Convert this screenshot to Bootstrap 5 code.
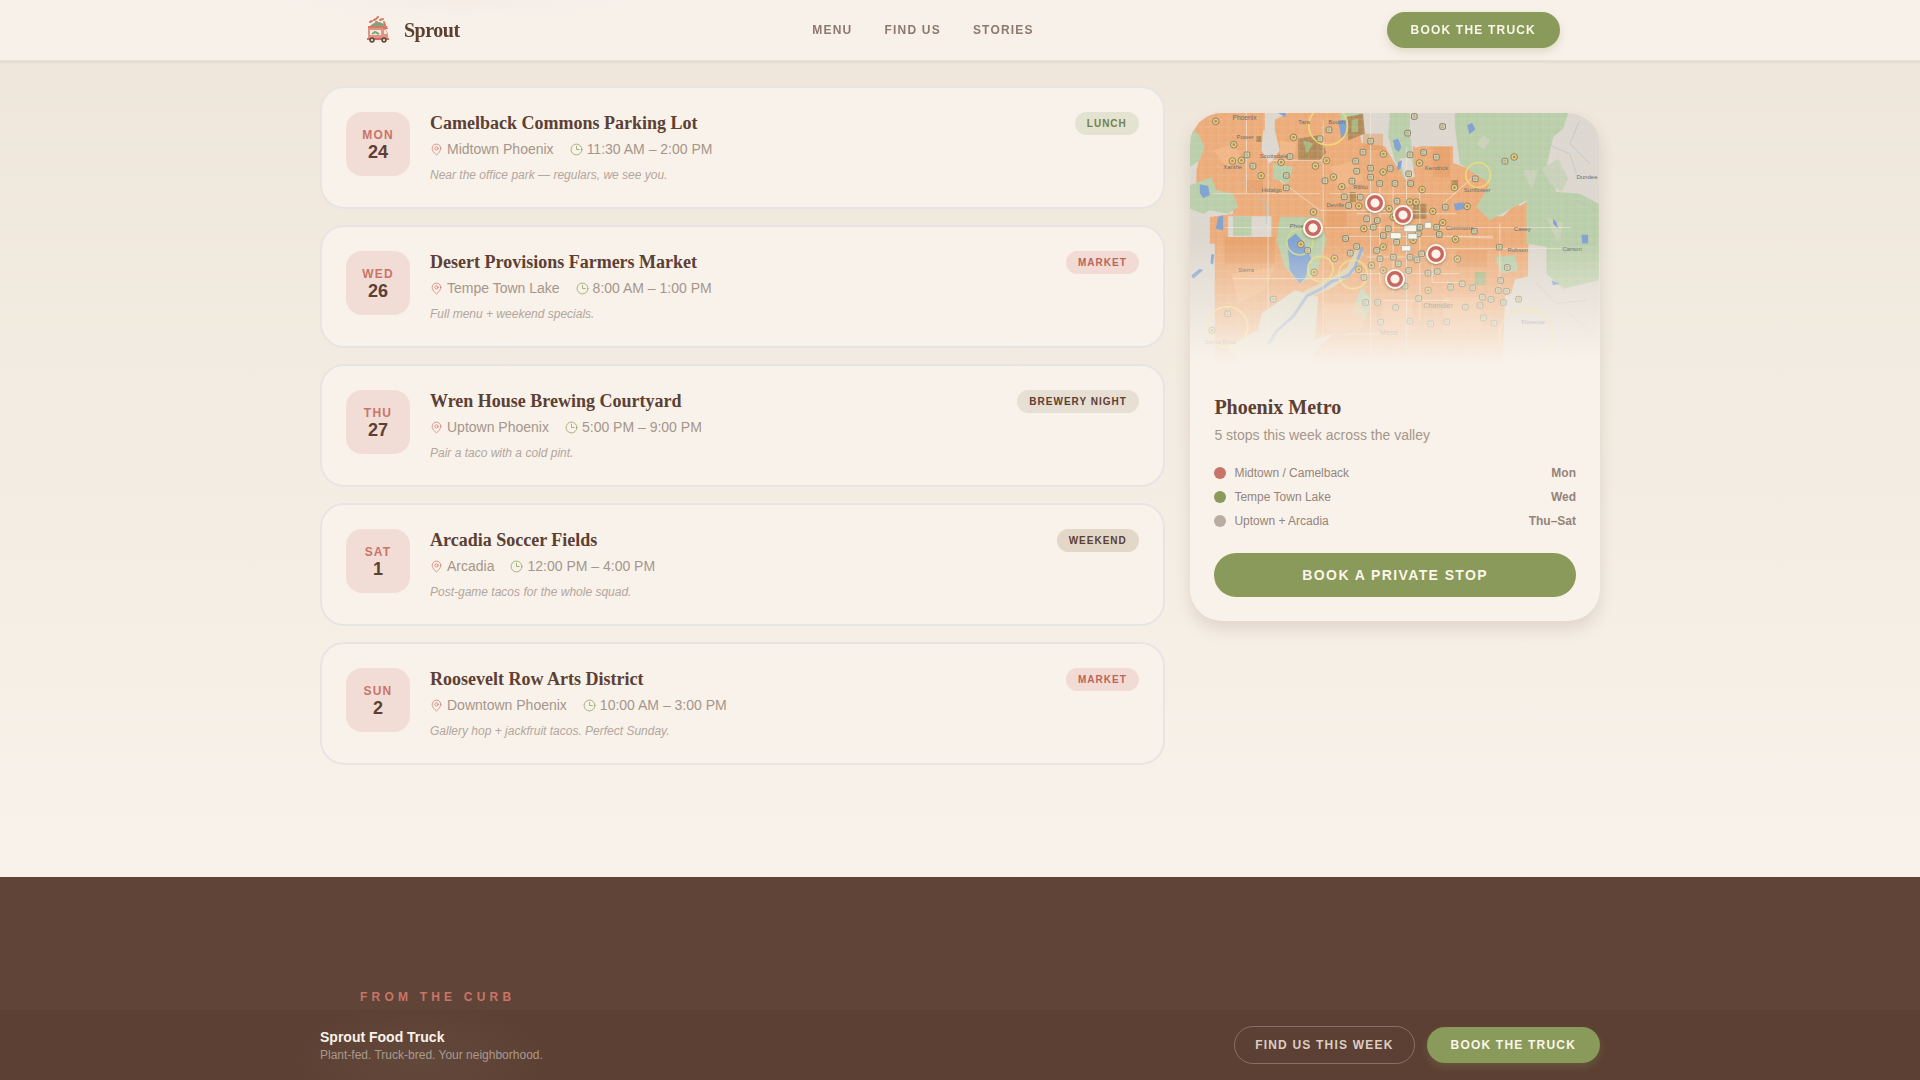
<!DOCTYPE html>
<html lang="en">
<head>
<meta charset="utf-8">
<meta name="viewport" content="width=device-width, initial-scale=1">
<title>Sprout Food Truck</title>
<link href="https://cdn.jsdelivr.net/npm/bootstrap@5.3.0/dist/css/bootstrap.min.css" rel="stylesheet">
<style>
:root{--cream:#f9f2ea;--brown:#5c4033;--rose:#c97468;--leaf:#8a9a5b;--muted:#a5968b}
body{font-family:"Liberation Sans",Arial,sans-serif;background:var(--cream);color:var(--brown);font-size:14px;line-height:20px}
.serif{font-family:"Liberation Serif","Times New Roman",serif;font-weight:700}
.wrap{max-width:1280px;margin-inline:auto;width:100%}
.site-nav{background:radial-gradient(ellipse 200px 24px at 460px 0,#f5ece6,transparent),#f8f1ea;border-bottom:1px solid #e8dfd8;box-shadow:0 1px 3px rgba(92,64,51,.1);padding:12px 0}
.site-nav .wrap{padding-inline:40px}
.brand-name{font-size:20px;line-height:28px;letter-spacing:-.025em;color:var(--brown)}
.nav-item-link{font-size:12px;line-height:16px;font-weight:700;letter-spacing:.1em;color:#8d796e;text-decoration:none}
.pill{font-size:12px;line-height:16px;font-weight:700;letter-spacing:.1em;padding:10px 24px;border:0;border-radius:50rem;background:var(--leaf);color:#fbf6e9;box-shadow:0 4px 8px rgba(138,154,91,.25)}
.pill:hover{background:#7a8a4d;color:#fff}
.pill-outline{background:transparent;border:1px solid #8a7064;color:#dccdc2;padding-inline:20px;box-shadow:none}
.pill-wide{font-size:14px;line-height:20px;padding-block:12px;box-shadow:none}
.stops{padding:86px 0 112px;background:linear-gradient(#eee6da,#f9f2ea)}
@media (min-width:992px){.stop-col{width:66%}.map-col{width:32%}}
.stop{background:var(--cream);border:2px solid #e7e4e3;border-radius:24px;padding:24px;gap:20px}
.day{width:64px;height:64px;border-radius:16px;background:#f2ddd6}
.day-name{font-size:12px;line-height:16px;font-weight:700;letter-spacing:.1em;color:var(--rose)}
.day-num{font-size:18px;line-height:18px;font-weight:700}
.stop-title{font-size:18px;line-height:23px}
.meta{color:var(--muted);gap:16px;margin-top:4px}
.meta svg{width:13px;height:13px;fill:none;stroke-width:1.5;stroke-linecap:round;stroke-linejoin:round}
.note{font-size:12px;line-height:16px;font-style:italic;color:#b3a69d;margin-top:8px}
.tag{font-size:10px;line-height:15px;font-weight:700;letter-spacing:.1em;padding:4px 12px;border-radius:50rem}
.tag-lunch{background:#e4e3d1;color:#738148}
.tag-market{background:#f2dbd5;color:#b9665b}
.tag-brewery{background:#e7dfd4;color:var(--brown)}
.tag-weekend{background:#e3d8c8;color:var(--brown)}
.map-card{top:113px;border-radius:32px;background:var(--cream);box-shadow:0 8px 16px rgba(92,64,51,.14)}
.map-box{height:256px;border-radius:32px 32px 0 0}
.map-box svg{width:100%;height:100%;display:block}
.map-fade{background:linear-gradient(rgba(249,242,234,.06) 50%,var(--cream) 98%)}
.pin{width:20px;height:20px;border-radius:50%;border:2px solid #fff6ef;background:radial-gradient(circle,#fff3ec 4px,#c9685f 5px);box-shadow:0 1px 3px rgba(92,64,51,.5)}
.metro{font-size:20px;line-height:28px}
.metro-sub{color:var(--muted);margin:4px 0 20px}
.legend{font-size:12px;line-height:16px;color:#95847a;gap:8px}
.dot{width:12px;height:12px;border-radius:50%}
.stories{background:#5f4437;padding:112px 0 0}
.stories .wrap{padding-inline:40px}
.eyebrow{font-size:12px;line-height:16px;font-weight:700;letter-spacing:.35em;color:var(--rose)}
.book-bar{background:radial-gradient(ellipse 130px 60px at 420px 50px,#62483b,transparent),#5c4033;padding:16px 0}
.tagline{font-size:12px;line-height:16px;color:#ab998e}
</style>
<script src="https://cdn.jsdelivr.net/npm/bootstrap@5.3.0/dist/js/bootstrap.bundle.min.js" defer></script>
</head>
<body class="d-flex flex-column min-vh-100">
<svg width="0" height="0" class="position-absolute" aria-hidden="true">
<symbol id="place" viewBox="0 0 24 24"><path d="M20 10c0 6-8 12-8 12S4 16 4 10a8 8 0 0 1 16 0Z"/><circle cx="12" cy="10" r="3"/></symbol>
<symbol id="clock" viewBox="0 0 24 24"><circle cx="12" cy="12" r="10"/><path d="M12 6v6h5"/></symbol>
</svg>

<nav class="site-nav fixed-top">
<div class="wrap d-flex align-items-center justify-content-between">
<a href="#" class="d-flex align-items-center gap-2 text-decoration-none">
<svg width="36" height="36" viewBox="0 0 36 36" aria-hidden="true">
<path d="M10 14q8-8 16 0z" fill="#7fa57d"/>
<path d="M10 10l2-1M14 8l2-1M17 6l1-1M20 8l3-1M24 10l1 3M16 10l1 0" stroke="#d67a68" stroke-width="2" stroke-linecap="round"/>
<path d="M8 14h19l1 3H8z" fill="#da7868"/><path d="M8 16h15v12H8z" fill="#df9486"/><path d="M10 18h11v5H10z" fill="#f7eadc"/><path d="M12 22l3-2 4 2" stroke="#7fa57d" stroke-width="2" fill="none"/>
<path d="M23 17h3l2 5v6h-5z" fill="#df9486"/><path d="M24 18h2l1 4h-3z" fill="#f4e7da"/><path d="M7 27h22" stroke="#cf6e60" stroke-width="2"/>
<g fill="#e9c99e" stroke="#5a4740" stroke-width="1.5"><circle cx="12" cy="28" r="2"/><circle cx="24" cy="28" r="2"/></g></svg>
<span class="serif brand-name">Sprout</span></a>
<div class="d-flex gap-4 nav-links">
<a class="nav-item-link me-2" href="#menu">MENU</a><a class="nav-item-link me-2" href="#find">FIND US</a><a class="nav-item-link" href="#stories">STORIES</a>
</div>
<button type="button" class="btn pill">BOOK THE TRUCK</button>
</div>
</nav>

<main class="stops" id="find">
<div class="wrap d-flex flex-column flex-lg-row justify-content-between gap-4 gap-lg-0">
<div class="stop-col d-flex flex-column gap-3">
<article class="stop d-flex"><div class="day d-flex flex-column align-items-center justify-content-center flex-shrink-0"><span class="day-name">MON</span><span class="day-num">24</span></div>
<div class="flex-grow-1"><h3 class="serif stop-title mb-0">Camelback Commons Parking Lot</h3><div class="meta d-flex flex-wrap"><span class="d-flex align-items-center gap-1"><svg stroke="#d47e73"><use href="#place"/></svg>Midtown Phoenix</span><span class="d-flex align-items-center gap-1"><svg stroke="#8fa563"><use href="#clock"/></svg>11:30 AM – 2:00 PM</span></div><p class="note mb-0">Near the office park — regulars, we see you.</p></div>
<span class="tag tag-lunch align-self-start">LUNCH</span></article>
<article class="stop d-flex"><div class="day d-flex flex-column align-items-center justify-content-center flex-shrink-0"><span class="day-name">WED</span><span class="day-num">26</span></div>
<div class="flex-grow-1"><h3 class="serif stop-title mb-0">Desert Provisions Farmers Market</h3><div class="meta d-flex flex-wrap"><span class="d-flex align-items-center gap-1"><svg stroke="#d47e73"><use href="#place"/></svg>Tempe Town Lake</span><span class="d-flex align-items-center gap-1"><svg stroke="#8fa563"><use href="#clock"/></svg>8:00 AM – 1:00 PM</span></div><p class="note mb-0">Full menu + weekend specials.</p></div>
<span class="tag tag-market align-self-start">MARKET</span></article>
<article class="stop d-flex"><div class="day d-flex flex-column align-items-center justify-content-center flex-shrink-0"><span class="day-name">THU</span><span class="day-num">27</span></div>
<div class="flex-grow-1"><h3 class="serif stop-title mb-0">Wren House Brewing Courtyard</h3><div class="meta d-flex flex-wrap"><span class="d-flex align-items-center gap-1"><svg stroke="#d47e73"><use href="#place"/></svg>Uptown Phoenix</span><span class="d-flex align-items-center gap-1"><svg stroke="#8fa563"><use href="#clock"/></svg>5:00 PM – 9:00 PM</span></div><p class="note mb-0">Pair a taco with a cold pint.</p></div>
<span class="tag tag-brewery align-self-start">BREWERY NIGHT</span></article>
<article class="stop d-flex"><div class="day d-flex flex-column align-items-center justify-content-center flex-shrink-0"><span class="day-name">SAT</span><span class="day-num">1</span></div>
<div class="flex-grow-1"><h3 class="serif stop-title mb-0">Arcadia Soccer Fields</h3><div class="meta d-flex flex-wrap"><span class="d-flex align-items-center gap-1"><svg stroke="#d47e73"><use href="#place"/></svg>Arcadia</span><span class="d-flex align-items-center gap-1"><svg stroke="#8fa563"><use href="#clock"/></svg>12:00 PM – 4:00 PM</span></div><p class="note mb-0">Post-game tacos for the whole squad.</p></div>
<span class="tag tag-weekend align-self-start">WEEKEND</span></article>
<article class="stop d-flex"><div class="day d-flex flex-column align-items-center justify-content-center flex-shrink-0"><span class="day-name">SUN</span><span class="day-num">2</span></div>
<div class="flex-grow-1"><h3 class="serif stop-title mb-0">Roosevelt Row Arts District</h3><div class="meta d-flex flex-wrap"><span class="d-flex align-items-center gap-1"><svg stroke="#d47e73"><use href="#place"/></svg>Downtown Phoenix</span><span class="d-flex align-items-center gap-1"><svg stroke="#8fa563"><use href="#clock"/></svg>10:00 AM – 3:00 PM</span></div><p class="note mb-0">Gallery hop + jackfruit tacos. Perfect Sunday.</p></div>
<span class="tag tag-market align-self-start">MARKET</span></article>
</div>

<div class="map-col">
<aside class="map-card position-sticky">
<div class="map-box position-relative overflow-hidden">
<svg viewBox="30 38 1230 768" preserveAspectRatio="xMidYMid slice" role="img" aria-label="Map of the Phoenix valley">
<defs>
<pattern id="streets" width="27" height="24" patternUnits="userSpaceOnUse"><path d="M0 8H27M9 0V24M18 8V24" stroke="#f7dcc0" stroke-width="1.5" fill="none" opacity=".7"/></pattern>
<g id="sq"><rect x="-8" y="-8" width="17" height="17" rx="4" fill="#d8cfa8" stroke="#6f705e" stroke-width="2.5"/><path d="M-4-2H4M-4 3H4" stroke="#938f70" stroke-width="2"/></g>
<g id="rd"><circle r="10" fill="#ecc97a" stroke="#73735c" stroke-width="2.5"/><circle r="4" fill="#a98a4b"/></g>
</defs>
<path d="M30 38H1260V806H30z" fill="#dad6cf"/>
<g fill="#eba772">
<path d="M75 38h180v70l30 30v-80l40-20h205l15 90 70 10 35 60 30-20 20 50v-90h120v50l110 40v60l20 10v50h20l40-40 10 10 30-20v75h55v15h-55l-5 60v80l-40 10-10 40-20 10v30l-10 240h-560l-20-90 80-70-90 30-120 80-20 40-80 0 0 50-50-10V430h-15v-80l70-10V300l-110-20v-70l15-60-35-40z"/>
</g>
<g fill="#b4cca6">
<path d="M30 80l25 20 20 40-15 40-30 20zM30 255l65-25 15 40 50 10 15 40-30 20-55-10-20 10-40-15z"/>
<path d="M820 38H1165l-15 47-30 25-20 90 30 75 70 5 57 30v230l-107 25-50-45v-80l-60-10V300l-110 60-40-40 40-70-90-60z"/>
<path d="M480 38h70l-10 70-50-10zM630 38h60v60l15 100-30 40-30-60-20-70zM280 190l60 10-15 50-45-15zM300 350h120l20 70-30 100-50 30-45-50-25-80zM945 470l60-5 10 45-50 10zM545 560l30 40-20 60-40-20z"/>
</g>
<path d="M1085 205l50-30 30 60-20 40-30-20zM890 130l20-25 20 15-15 30zM1030 210l45 0 -20 60zM1100 350l50 20-15 60z" fill="#c5d0b7"/>
<path d="M705 38h120v95H735l-30 10zM660 175l35-5 10 60-30 5zM145 348h130v62H145zM250 90h35l15 60-30 40-25-40z" fill="#dad6cf"/>
<path d="M140 740l95-50 10-50 100-70 70 20-15 216H200z" fill="#d8dac8"/>
<path d="M160 348h55v58h-55z" fill="#b4cba5"/>
<path d="M355 115l60-10 25 50-20 25h-65zM500 50l50-10 5 60-50 20zM700 310h40v45h-40zM815 240h20v22h-20zM230 107h14v18h-14zM510 275h18v30h-18z" fill="#ac8350"/>
<path d="M370 120l30 10-20 30zM515 60l20-5v40h-20zM885 515h32v40h-32z" fill="#9fb279"/>
<path d="M30 38H1260V806H30z" fill="url(#streets)" opacity=".55"/>
<g fill="#f5ba8a" opacity=".6"><path d="M155 520l130-20-30 70-80 40zM430 610h120v80H440zM790 590h110v100H790zM100 150l60-20 30 50-50 20zM300 120l50 10-10 50-40-10zM450 200l80-20 20 60-70 30zM610 600h90v90h-90z"/></g>
<g fill="#e2955c" opacity=".5"><path d="M135 410h150v80H135zM760 140h50v90h-50zM830 450h90v50h-90zM440 320h60v60h-60zM550 100h60v50h-60zM200 240h50v40h-50z"/></g>
<g fill="#7c9fd0">
<path d="M322 420l25-20 20 20 28 55-20 60-15 15-30-40zM60 252l25 5 5 28-20 8-10-15zM640 120l15-5 10 25-8 15-12-10zM655 185l12-5-5 25-10 5zM862 75l15-8 10 20-18 15zM475 60h25v45l-15 8zM295 38h25l-5 12zM115 350l15-5v45l-22-5zM822 310l30-4v20l-25 5zM1205 403h20v28h-18zM95 460l8 3-3 30-8-5zM35 525l25-20 10 5-30 25zM1120 355l10 10 5 20-15-15zM1115 540l25 10-20 5z"/></g>
<path d="M540 450l-28 60-60 40-70 32-45 60-50 58-20 30" fill="none" stroke="#d3dcc6" stroke-width="26" opacity=".7"/>
<path d="M548 440l-22 60-20 25-50 18-30 22-45 22-40 60-50 45-25 40" fill="none" stroke="#8eacd1" stroke-width="9" stroke-linejoin="round"/>
<g fill="none" stroke="#efe9da" stroke-width="2.5" opacity=".8"><path d="M265 180h180M265 180v540M135 382h1040M500 408h440M768 445h380M572 38v740M757 490v56h80M680 140v600M430 60v660M300 240l120 90h300M790 310l90-80M800 408l140 5M160 535h330M610 600h200M960 370v190M500 700h160M200 38v240M100 280h320M450 280h380M530 340h300M560 470h220M600 250v300M640 260v320M720 260v400M540 520h300"/></g>
<g fill="none" stroke="#b3c0c0" stroke-width="2"><path d="M1080 90l40 50 50 20 20 60M1200 60l-30 70 60 60M1070 550l60 60 90-10M1170 640l70 60M180 230l80 80v60M230 280l50 60M1140 480l30-50h80M1190 300l60 30"/></g>
<g fill="none" stroke="#eedb72" stroke-width="5" opacity=".9"><circle cx="445" cy="76" r="58"/><circle cx="895" cy="224" r="37"/><circle cx="360" cy="425" r="39" stroke="#cfdb88"/><circle cx="422" cy="506" r="38"/><circle cx="520" cy="522" r="43"/><circle cx="143" cy="680" r="61"/><circle cx="1038" cy="705" r="80"/></g>
<g id="dots"></g>
<g fill="#f9f5e8" stroke="#8aa39b" stroke-width="2"><path d="M632 397h32v18h-32zM672 374h38v20h-38zM735 366h20v18h-20zM665 436h28v16h-28zM684 400h28v16h-28z"/></g>
<g font-family="Liberation Sans, sans-serif" font-size="18" fill="#5f676b"><text x="158" y="60" font-size="20">Phoenix</text><text x="355" y="70">Tara</text><text x="445" y="72">Bouch</text><text x="170" y="116">Power</text><text x="240" y="174">Scottsdale</text><text x="130" y="207">Xanthe</text><text x="245" y="275">Hidalgo</text><text x="330" y="382">Phoenix</text><text x="440" y="319">Deville</text><text x="175" y="516">Sierra</text><text x="520" y="265">Rillito</text><text x="735" y="209">Kendrick</text><text x="852" y="275">Sunflower</text><text x="1190" y="236">Dundee</text><text x="798" y="388">Commons</text><text x="983" y="454">Robson</text><text x="1002" y="391">Casey</text><text x="1148" y="451">Carson</text><text x="730" y="623" font-size="22">Chandler</text><text x="600" y="703" font-size="22">Mesa</text><text x="1025" y="671">Florence</text><text x="75" y="730">Santa Rosa</text></g>
</svg>
<div class="map-fade position-absolute top-0 start-0 w-100 h-100"></div>
<span class="pin position-absolute translate-middle" style="left:45%;top:35%"></span>
<span class="pin position-absolute translate-middle" style="left:52%;top:40%"></span>
<span class="pin position-absolute translate-middle" style="left:30%;top:45%"></span>
<span class="pin position-absolute translate-middle" style="left:60%;top:55%"></span>
<span class="pin position-absolute translate-middle" style="left:50%;top:65%"></span>
</div>
<div class="p-4">
<h3 class="serif metro mb-0">Phoenix Metro</h3>
<p class="metro-sub">5 stops this week across the valley</p>
<ul class="legend list-unstyled d-flex flex-column mb-4">
<li class="d-flex align-items-center gap-2"><span class="dot" style="background:#c97468"></span>Midtown / Camelback<b class="ms-auto">Mon</b></li>
<li class="d-flex align-items-center gap-2"><span class="dot" style="background:#8a9a5b"></span>Tempe Town Lake<b class="ms-auto">Wed</b></li>
<li class="d-flex align-items-center gap-2"><span class="dot" style="background:#bbaca1"></span>Uptown + Arcadia<b class="ms-auto">Thu–Sat</b></li>
</ul>
<button type="button" class="btn pill pill-wide w-100">BOOK A PRIVATE STOP</button>
</div>
</aside>
</div>
</div>
</main>

<section class="stories flex-grow-1" id="stories"><div class="wrap"><p class="eyebrow mb-0">FROM THE CURB</p></div></section>

<footer class="book-bar fixed-bottom">
<div class="wrap d-flex align-items-center justify-content-between">
<div><div class="fw-bold" style="color:var(--cream)">Sprout Food Truck</div><div class="tagline">Plant-fed. Truck-bred. Your neighborhood.</div></div>
<div class="d-flex align-items-center" style="gap:12px"><button type="button" class="btn pill pill-outline">FIND US THIS WEEK</button><button type="button" class="btn pill">BOOK THE TRUCK</button></div>
</div>
</footer>
<script>
// Restaurant markers: x, y pairs in map units
const round=[108,63,162,133,158,182,185,180,304,186,341,111,407,197,440,181,244,226,461,230,486,259,611,161,610,215,719,188,727,268,1003,170,824,262,862,318,401,335,537,317,628,325,690,305,709,305,759,333,789,367,363,432,464,474,403,516,537,507,833,476,827,417,552,385,610,440,640,350,700,420,575,495,610,510,745,570,97,690];
const square=[447,88,420,115,201,163,219,197,319,225,319,262,330,168,435,241,516,242,572,122,549,155,527,182,530,212,572,203,572,230,599,249,631,204,645,249,690,163,683,98,703,48,788,78,731,156,769,170,686,220,692,249,493,289,506,315,541,290,560,355,592,360,651,302,796,320,883,392,975,182,886,235,383,450,497,414,511,458,530,438,552,531,590,450,600,475,580,380,625,385,650,425,610,405,720,380,715,400,770,380,778,402,725,460,711,478,690,470,640,470,655,490,686,510,744,518,772,513,958,440,982,501,962,540,847,550,812,560,878,562,907,590,933,597,955,570,980,572,1016,596,280,596,557,606,593,606,647,621,675,557,716,594,143,640,602,665,690,662,752,670,800,664,856,620,900,615,910,652,942,668,970,606];
const layer=document.getElementById('dots');
const put=(list,id)=>{for(let i=0;i<list.length;i+=2){const u=document.createElementNS('http://www.w3.org/2000/svg','use');u.setAttribute('href',id);u.setAttribute('x',list[i]);u.setAttribute('y',list[i+1]);layer.append(u)}};
put(square,'#sq');put(round,'#rd');
</script>
</body>
</html>
